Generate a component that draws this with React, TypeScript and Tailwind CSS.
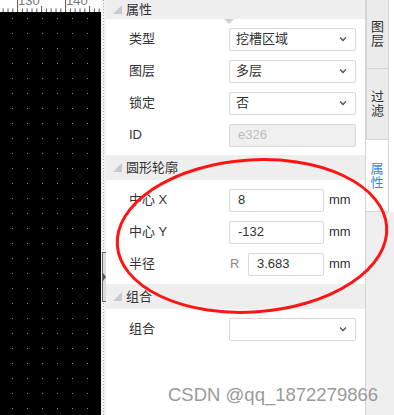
import React from 'react';

const FONT = "font-['Liberation_Sans','Noto_Sans_CJK_SC',sans-serif]";

const Chevron = () => (
  <svg width="8" height="6" viewBox="0 0 8 6" className="shrink-0">
    <polyline points="1,1.5 4,4.5 7,1.5" fill="none" stroke="#555" strokeWidth="1.4" />
  </svg>
);

const Ruler = () => {
  const ticks = [];
  for (let i = 0; i < 22; i++) {
    const x = 3.2 + i * 4.8;
    const n = (i - 3) % 10;
    const h = n === 0 ? 12 : n === 5 || n === -5 ? 6 : 3.5;
    ticks.push(<line key={i} x1={x} x2={x} y1={12 - h} y2={12} stroke="#555" strokeWidth="1" />);
  }
  return (
    <svg width="101" height="12" className="block bg-white shrink-0">
      {ticks}
      <text x="18" y="5" fontSize="13" fill="#777" fontFamily="Liberation Sans">130</text>
      <text x="66" y="5" fontSize="13" fill="#777" fontFamily="Liberation Sans">140</text>
    </svg>
  );
};

const Canvas = () => (
  <div className="w-[101px] h-full flex flex-col shrink-0">
    <Ruler />
    <div className="flex-1 bg-black">
      <svg width="101" height="403" className="block">
        <defs>
          <pattern id="dots" x="12" y="6" width="15" height="15" patternUnits="userSpaceOnUse">
            <rect width="1" height="1" fill="#8a8a8a" />
          </pattern>
        </defs>
        <rect width="101" height="403" fill="url(#dots)" />
      </svg>
    </div>
  </div>
);

const Splitter = () => (
  <div className="relative w-[5px] h-full bg-[#f2f2f2] shrink-0 flex justify-center">
    <div className="w-px h-full bg-[linear-gradient(to_bottom,#a8a8a8_1px,transparent_1px)] bg-size-[1px_3px]" />
    <div className="absolute left-[1px] top-[252px] w-[5px] h-[50px] border border-[#6a5e5e] bg-[#dcdcdc] flex items-center justify-center">
      <div className="w-0 h-0 border-y-[4px] border-y-transparent border-l-[3px] border-l-[#555]" />
    </div>
  </div>
);

const SectionHeader = ({ title, h = 'h-[25px]' }: { title: string; h?: string }) => (
  <div className={`${h} bg-[#eeeeee] flex items-center pl-[7px] shrink-0`}>
    <div className="w-0 h-0 border-l-[9px] border-l-transparent border-b-[9px] border-b-[#c9c9c9] mr-[4px]" />
    <span className="text-[13px] text-[#333]">{title}</span>
  </div>
);

const Row = ({ label, children }: { label: string; children: React.ReactNode }) => (
  <div className="h-[32px] flex items-center pl-[23px]">
    <span className="w-[100px] text-[13px] text-[#333] shrink-0">{label}</span>
    {children}
  </div>
);

const Select = ({ value }: { value: string }) => (
  <div className="w-[127px] h-[23px] border border-[#d9d9d9] rounded-[2px] bg-white flex items-center justify-between pl-[6px] pr-[8px]">
    <span className="text-[13px] text-[#333]">{value}</span>
    <Chevron />
  </div>
);

const NumInput = ({ value, w = 'w-[95px]' }: { value: string; w?: string }) => (
  <div className={`${w} h-[23px] border border-[#d9d9d9] rounded-[2px] bg-white flex items-center pl-[8px]`}>
    <span className="text-[13px] text-[#333]">{value}</span>
  </div>
);

const Panel = () => (
  <div className="relative w-[259px] h-full bg-white flex flex-col shrink-0">
    <SectionHeader title="属性" h="h-[19px]" />
    <div className="absolute left-[118px] top-[19px] w-0 h-0 border-x-[5px] border-x-transparent border-t-[5px] border-t-[#cfcfcf]" />
    <div className="py-[4px]">
      <Row label="类型"><Select value="挖槽区域" /></Row>
      <Row label="图层"><Select value="多层" /></Row>
      <Row label="锁定"><Select value="否" /></Row>
      <Row label="ID">
        <div className="w-[127px] h-[23px] border border-[#d9d9d9] rounded-[2px] bg-[#f0f0f0] flex items-center pl-[8px]">
          <span className="text-[13px] text-[#bdbdbd]">e326</span>
        </div>
      </Row>
    </div>
    <SectionHeader title="圆形轮廓" />
    <div className="py-[4px]">
      <Row label="中心 X">
        <NumInput value="8" />
        <span className="ml-[5px] text-[13px] text-[#333]">mm</span>
      </Row>
      <Row label="中心 Y">
        <NumInput value="-132" />
        <span className="ml-[5px] text-[13px] text-[#333]">mm</span>
      </Row>
      <Row label="半径">
        <span className="w-[19px] pl-[1px] text-[13px] text-[#888]">R</span>
        <NumInput value="3.683" w="w-[76px]" />
        <span className="ml-[5px] text-[13px] text-[#333]">mm</span>
      </Row>
    </div>
    <SectionHeader title="组合" />
    <div className="py-[4px]">
      <Row label="组合"><Select value="" /></Row>
    </div>
  </div>
);

const Tab = ({ text, h, active }: { text: string; h: string; active?: boolean }) => (
  <div
    className={`${h} w-[23px] flex flex-col items-center justify-center border-b border-r border-[#d4d4d4] ${
      active ? 'bg-white text-[#2f8cf4]' : 'bg-[#ebebeb] border-l text-[#333]'
    }`}
  >
    {text.split('').map((c) => (
      <span key={c} className="text-[13px] leading-[14px]">{c}</span>
    ))}
  </div>
);

const Tabs = () => (
  <div className="w-[29px] h-full bg-[#efefef] border-l border-[#d4d4d4] flex flex-col shrink-0">
    <div className="flex bg-white">
      <div className="flex flex-col">
        <Tab text="图层" h="h-[69px]" />
        <Tab text="过滤" h="h-[71px]" />
        <Tab text="属性" h="h-[72px]" active />
      </div>
    </div>
  </div>
);

export default function App() {
  return (
    <div className={`relative w-[394px] h-[415px] overflow-hidden flex bg-white ${FONT}`}>
      <Canvas />
      <Splitter />
      <Panel />
      <Tabs />
      <svg width="394" height="415" className="absolute inset-0 pointer-events-none">
        <ellipse cx="252" cy="236" rx="135" ry="76" fill="none" stroke="#ff1414" strokeWidth="3" transform="rotate(-4 252 236)" />
      </svg>
      <div className="absolute left-[168px] top-[381px] text-[18.5px] text-[#9a9a9a] font-['Liberation_Sans',sans-serif] pointer-events-none">
        CSDN @qq_1872279866
      </div>
    </div>
  );
}
